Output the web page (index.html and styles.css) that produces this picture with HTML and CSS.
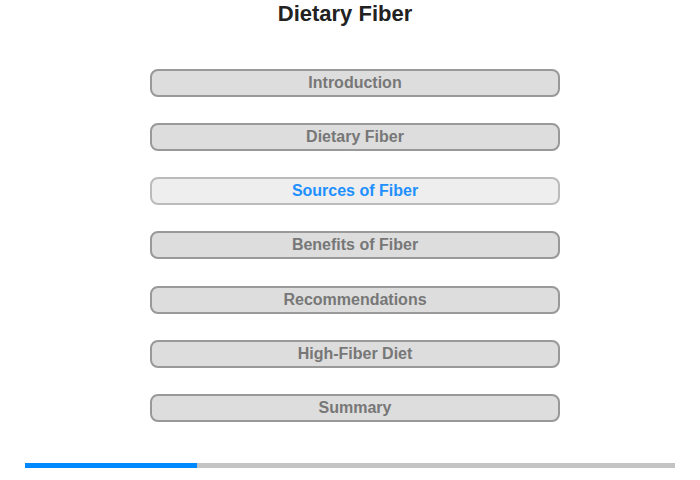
FILE: index.html
```html
<!DOCTYPE html>
<html>
<head>
<meta charset="utf-8">
<link rel="stylesheet" href="styles.css">
</head>
<body>
<div class="page">
  <h1 class="title">Dietary Fiber</h1>
  <nav class="menu">
    <div class="item">Introduction</div>
    <div class="item">Dietary Fiber</div>
    <div class="item active">Sources of Fiber</div>
    <div class="item">Benefits of Fiber</div>
    <div class="item">Recommendations</div>
    <div class="item">High-Fiber Diet</div>
    <div class="item">Summary</div>
  </nav>
  <div class="progress"><div class="fill"></div></div>
</div>
</body>
</html>
```

FILE: styles.css
```css
html, body {
  margin: 0;
  padding: 0;
  background: #fff;
}
body {
  font-family: "Liberation Sans", Arial, sans-serif;
}
.page {
  width: 700px;
  height: 480px;
  display: flex;
  flex-direction: column;
  align-items: center;
}
.title {
  margin: 0;
  padding-top: 1px;
  font-size: 22px;
  line-height: 26px;
  font-weight: bold;
  color: #222;
  transform: translateX(-5px);
}
.menu {
  margin-top: 42px;
  display: flex;
  flex-direction: column;
  gap: 26.17px;
  margin-left: 10px;
}
.item {
  box-sizing: border-box;
  width: 410px;
  height: 28px;
  border: 2px solid #999;
  border-radius: 8px;
  background: #ddd;
  color: #777;
  font-size: 16px;
  font-weight: bold;
  line-height: 24px;
  text-align: center;
}
.item.active {
  background: #eee;
  border-color: #bbb;
  color: #1e90ff;
}
.progress {
  margin-top: 41px;
  width: 650px;
  height: 5px;
  background: #c4c4c4;
  display: flex;
}
.fill {
  width: 172px;
  background: #0088ff;
}
```
